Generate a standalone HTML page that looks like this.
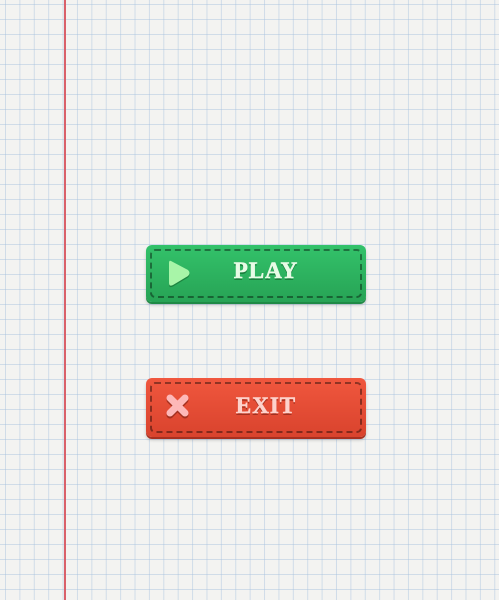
<!DOCTYPE html>
<html><head><style>
html,body{margin:0;padding:0}
body{width:499px;height:600px;overflow:hidden;position:relative;background-color:#f3f3f1;
background-image:linear-gradient(90deg,rgba(165,192,222,.45) 1px,transparent 1px),linear-gradient(0deg,rgba(165,192,222,.45) 1px,transparent 1px);
background-size:14.4px 15px,14.4px 15px;background-position:5px 0,0 5px;}
.red{position:absolute;left:64px;top:0;width:1.5px;height:600px;background:#d9606a}
.btn{position:absolute;left:146px;width:220px;border-radius:6px;box-sizing:border-box}
.btn .in{position:absolute;left:4px;top:4px;right:4px;bottom:4px;border:2px dashed rgba(0,0,0,.4);border-radius:5px}
.btn span{position:absolute;left:0;right:0;text-align:center;font:bold 23px "Liberation Serif",serif;letter-spacing:1px;-webkit-text-stroke:0.6px currentColor}
.play{top:245px;height:57px;background:linear-gradient(#33c26a,#27a355);box-shadow:0 2px 0 #1f8a45,0 3px 3px rgba(0,0,0,.2)}
.play span{top:13px;color:#e8fbe6;text-shadow:0 2px 0 #1c7e3e;padding-left:20px}
.exit{top:378px;height:59px;background:linear-gradient(#f0573e,#d9432d);box-shadow:0 2px 0 #a83020,0 3px 3px rgba(0,0,0,.2)}
.exit span{top:15px;color:#fdd2cc;text-shadow:0 2px 0 #a3301f;padding-left:20px}
</style></head><body>
<div class="red"></div>
<div class="btn play"><div class="in"></div>
<svg style="position:absolute;left:20px;top:12px" width="26" height="32" viewBox="0 0 26 32"><path d="M5 4 Q3 3 3 6 L3 26 Q3 30 7 28 L22 19 Q25 16 22 13 Z" fill="#1d8440" transform="translate(0,1.5)"/><path d="M5 4 Q3 3 3 6 L3 26 Q3 30 7 28 L22 19 Q25 16 22 13 Z" fill="#a8f5a8"/></svg>
<span>PLAY</span></div>
<div class="btn exit"><div class="in"></div>
<svg style="position:absolute;left:18px;top:14px" width="28" height="30" viewBox="0 0 28 30"><g stroke-linecap="round" stroke-width="7"><g stroke="#a3301f" transform="translate(0,2)"><path d="M6 6 L21 21 M21 6 L6 21"/></g><g stroke="#fdb8b8"><path d="M6 6 L21 21 M21 6 L6 21"/></g></g></svg>
<span>EXIT</span></div>
</body></html>
